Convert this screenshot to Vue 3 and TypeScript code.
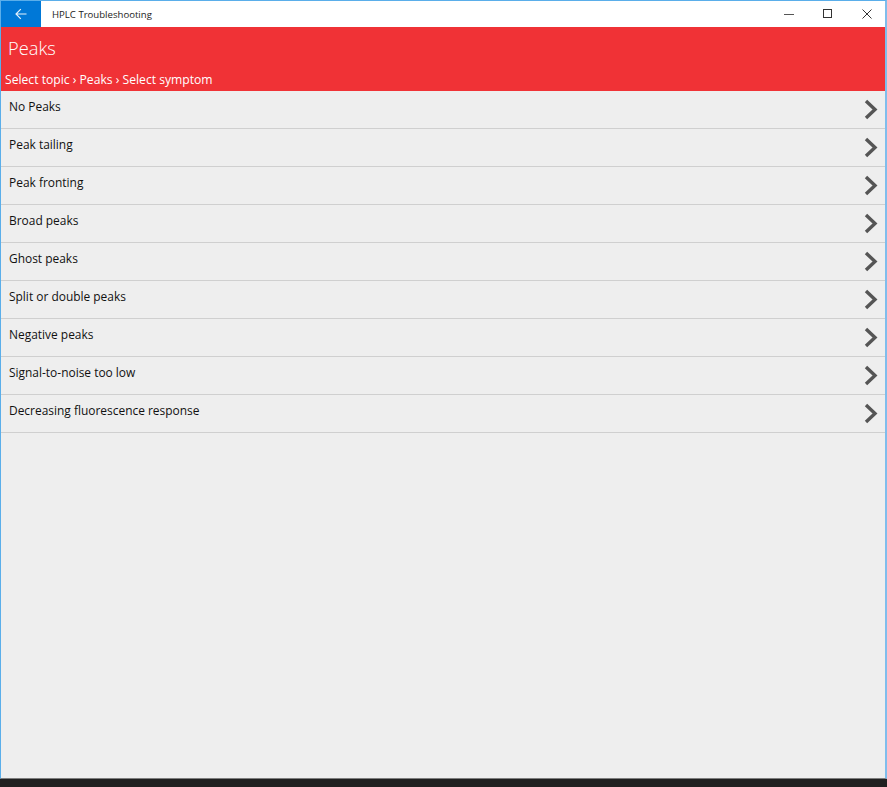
<script setup lang="ts">
const symptoms: string[] = [
  'No Peaks',
  'Peak tailing',
  'Peak fronting',
  'Broad peaks',
  'Ghost peaks',
  'Split or double peaks',
  'Negative peaks',
  'Signal-to-noise too low',
  'Decreasing fluorescence response',
]
</script>

<template>
  <div class="screen">
    <div class="window">
      <div class="titlebar">
        <button class="back" aria-label="Back">
          <svg width="12" height="12" viewBox="0 0 12 12" fill="none" stroke="#e8f3fc" stroke-width="1.15">
            <path d="M11.5 6H1M5.8 1.2 1 6l4.8 4.8" />
          </svg>
        </button>
        <span class="app-title">HPLC Troubleshooting</span>
        <div class="controls">
          <span class="control">
            <svg width="10" height="10" viewBox="0 0 10 10" fill="none" stroke="#555" stroke-width="1"><path d="M0 5.5h10" /></svg>
          </span>
          <span class="control">
            <svg width="10" height="10" viewBox="0 0 10 10" fill="none" stroke="#333" stroke-width="1"><rect x=".5" y=".5" width="8" height="8" /></svg>
          </span>
          <span class="control">
            <svg width="10" height="10" viewBox="0 0 10 10" fill="none" stroke="#333" stroke-width="1"><path d="M.5.5l9 9M9.5.5l-9 9" /></svg>
          </span>
        </div>
      </div>
      <header class="header">
        <h1 class="heading">Peaks</h1>
        <div class="crumbs">Select topic › Peaks › Select symptom</div>
      </header>
      <ul class="list">
        <li v-for="item in symptoms" :key="item" class="row">
          <span class="label">{{ item }}</span>
          <svg class="chevron" width="14" height="21" viewBox="0 0 14 21" fill="none" stroke="#555" stroke-width="3.4">
            <path d="M2 2l9 8.5L2 19" />
          </svg>
        </li>
      </ul>
    </div>
    <div class="taskbar"></div>
  </div>
</template>

<style scoped>
.screen {
  width: 887px;
  height: 787px;
  display: flex;
  flex-direction: column;
  overflow: hidden;
  font-family: "Open Sans", "Noto Sans", sans-serif;
}
.window {
  flex: 1;
  min-height: 0;
  display: flex;
  flex-direction: column;
  box-sizing: border-box;
  background: #eeeeee;
  border: 1px solid #5aaeea;
  border-right: 2px solid #7fbdec;
  border-bottom: 1px solid #7d7d7d;
}
.titlebar {
  height: 26px;
  flex: none;
  display: flex;
  align-items: center;
  background: #fff;
}
.back {
  width: 40px;
  height: 26px;
  padding: 0 0 1px;
  border: 0;
  background: #0078d7;
  display: flex;
  align-items: center;
  justify-content: center;
}
.app-title {
  margin-left: 11px;
  font-size: 9.6px;
  color: #222;
}
.controls {
  margin-left: auto;
  display: flex;
  margin-right: -1px;
}
.control {
  width: 39px;
  height: 26px;
  display: flex;
  align-items: center;
  justify-content: center;
}
.header {
  height: 64px;
  flex: none;
  box-sizing: border-box;
  background: #f03236;
  color: #fff;
  display: flex;
  flex-direction: column;
  padding: 0 0 3px 4px;
}
.heading {
  margin: 8px 0 0 3px;
  font-size: 18.3px;
  line-height: 26px;
  font-weight: 300;
}
.crumbs {
  margin-top: auto;
  font-size: 12.15px;
  line-height: 17px;
}
.list {
  list-style: none;
  margin: 0;
  padding: 0;
}
.row {
  height: 38px;
  box-sizing: border-box;
  border-bottom: 1px solid #cfcfcf;
  padding: 6px 7px 0 8px;
  display: flex;
  justify-content: space-between;
  align-items: flex-start;
}
.label {
  font-size: 11.95px;
  line-height: 19px;
  color: #111;
}
.chevron {
  margin-top: 2px;
}
.taskbar {
  height: 8px;
  flex: none;
  background: #202020;
}
</style>

<style>
html, body { margin: 0; background: #202020; }
</style>
